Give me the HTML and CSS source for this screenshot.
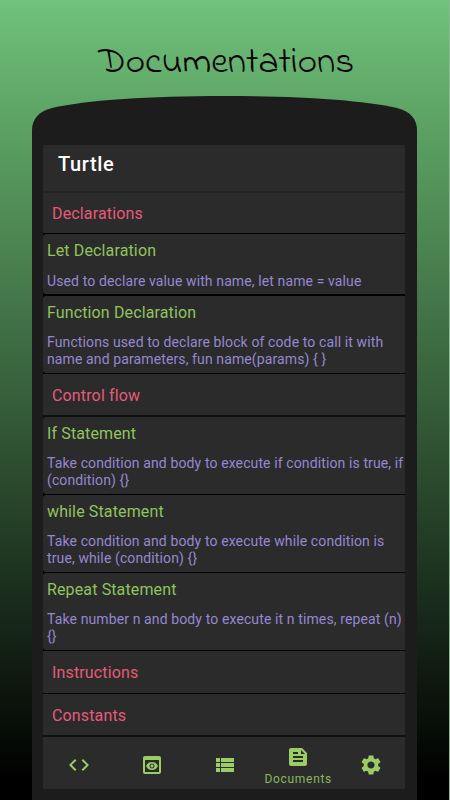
FILE: index.html
```html
<!DOCTYPE html>
<html lang="en">
<head>
  <meta charset="UTF-8">
  <meta name="viewport" content="width=device-width, initial-scale=1">
  <title>Turtle - Documentations</title>
  <link rel="stylesheet" href="styles.css">
</head>

<body>

<h1 class="headline"><svg width="449" height="60" viewBox="0 0 449 60"><text x="98.5" y="42" textLength="255.5" lengthAdjust="spacingAndGlyphs">Documentations</text></svg></h1>

<!-- Phone -->
<div class="phone">
  <svg class="phone-top" viewBox="0 0 385 49">
    <path d="M0 49V34C0 23 7 15 21 11.7C58 4 115 0 192.5 0S327 4 364 11.7C378 15 385 23 385 34V49Z"/>
  </svg>

  <div class="screen">
    <div class="topbar">Turtle</div>

    <!-- Docs list -->
    <div class="docs-list">
      <div class="group first">Declarations</div>
      <div class="doc short">
        <div class="doc-name">Let Declaration</div>
        <div class="doc-text">Used to declare value with name, let name = value</div>
      </div>
      <div class="doc">
        <div class="doc-name">Function Declaration</div>
        <div class="doc-text">Functions used to declare block of code to call it with<br>name and parameters, fun name(params) { }</div>
      </div>

      <div class="group thick">Control flow</div>
      <div class="doc">
        <div class="doc-name">If Statement</div>
        <div class="doc-text">Take condition and body to execute if condition is true, if<br>(condition) {}</div>
      </div>
      <div class="doc">
        <div class="doc-name">while Statement</div>
        <div class="doc-text">Take condition and body to execute while condition is<br>true, while (condition) {}</div>
      </div>
      <div class="doc">
        <div class="doc-name">Repeat Statement</div>
        <div class="doc-text">Take number n and body to execute it n times, repeat (n)<br>{}</div>
      </div>

      <div class="group">Instructions</div>
      <div class="group thick">Constants</div>
    </div>

    <!-- Bottom nav -->
    <div class="bottom-nav">
      <div class="nav-item">
        <svg viewBox="0 0 24 24"><path d="M9.4 16.6 4.8 12l4.6-4.6L8 6l-6 6 6 6 1.4-1.4zm5.2 0 4.6-4.6-4.6-4.6L16 6l6 6-6 6-1.4-1.4z"/></svg>
      </div>
      <div class="nav-item">
        <svg viewBox="0 0 24 24"><path d="M19 3H5c-1.11 0-2 .9-2 2v14c0 1.1.89 2 2 2h14c1.1 0 2-.9 2-2V5c0-1.1-.89-2-2-2zm0 16H5V7h14v12zm-5.500-6c0 .83-.67 1.500-1.500 1.500s-1.500-.67-1.500-1.500.67-1.500 1.500-1.500 1.500.67 1.500 1.500zM12 9c-2.730 0-5.060 1.660-6 4 .94 2.340 3.270 4 6 4s5.060-1.660 6-4c-.94-2.340-3.270-4-6-4zm0 6.500c-1.380 0-2.500-1.120-2.500-2.500s1.120-2.500 2.500-2.500 2.500 1.120 2.500 2.500-1.120 2.500-2.500 2.500z"/></svg>
      </div>
      <div class="nav-item">
        <svg viewBox="0 0 24 24"><path d="M3 14h4v-4H3v4zm0 5h4v-4H3v4zM3 9h4V5H3v4zm5 5h13v-4H8v4zm0 5h13v-4H8v4zM8 5v4h13V5H8z"/></svg>
      </div>
      <div class="nav-item active">
        <svg viewBox="0 0 24 24"><path d="M16 3H5c-1.100 0-1.990.9-1.990 2L3 19c0 1.100.89 2 1.990 2H19c1.100 0 2-.9 2-2V8l-5-5zM7 7h5v2H7V7zm10 10H7v-2h10v2zm0-4H7v-2h10v2zm-2-4V5l4 4h-4z"/></svg>
        <span>Documents</span>
      </div>
      <div class="nav-item">
        <svg viewBox="0 0 24 24"><path d="M19.140 12.940c.04-.3.06-.61.06-.94 0-.32-.02-.64-.07-.94l2.030-1.580c.18-.14.23-.41.12-.61l-1.920-3.320c-.12-.22-.37-.29-.59-.22l-2.390.96c-.5-.38-1.030-.7-1.620-.94l-.36-2.540c-.04-.24-.24-.41-.48-.41h-3.840c-.24 0-.43.17-.47.41l-.36 2.540c-.59.24-1.130.57-1.620.94l-2.390-.96c-.22-.08-.47 0-.59.22L2.740 8.870c-.12.21-.08.47.12.61l2.030 1.580c-.05.3-.09.63-.09.94s.02.64.07.94l-2.030 1.580c-.18.14-.23.41-.12.61l1.920 3.320c.12.22.37.29.59.22l2.390-.96c.5.38 1.030.7 1.620.94l.36 2.540c.05.24.24.41.48.41h3.840c.24 0 .44-.17.47-.41l.36-2.540c.59-.24 1.130-.56 1.620-.94l2.390.96c.22.08.47 0 .59-.22l1.920-3.320c.12-.22.07-.47-.12-.61l-2.010-1.580zM12 15.600c-1.980 0-3.600-1.620-3.600-3.600s1.620-3.600 3.600-3.600 3.600 1.620 3.600 3.600-1.620 3.600-3.600 3.600z"/></svg>
      </div>
    </div>
  </div>
</div>

</body>
</html>
```
FILE: styles.css
```css
html {
  background-color: #8cb893;
}
body {
  margin: 0;
  width: 449px;
  height: 800px;
  overflow: hidden;
  font-family: Roboto, sans-serif;
  background: linear-gradient(#70c27d 0, #60a867 100px, #000 780px);
}
* {
  box-sizing: border-box;
}
.headline {
  margin: 0;
  height: 96px;
  padding-top: 30px;
}
.headline svg {
  display: block;
}
.headline text {
  font-family: "Indie Flower", "Open Sans", sans-serif;
  font-size: 36px;
  font-weight: 300;
  fill: #000;
}
.phone {
  width: 385px;
  height: 704px;
  margin-left: 32px;
}
.phone-top {
  display: block;
  width: 385px;
  height: 49px;
  fill: #1c1c1c;
}
.screen {
  height: 655px;
  padding: 0 12px 0 11px;
  background-color: #1c1c1c;
}
.topbar {
  height: 48px;
  padding-left: 15px;
  line-height: 39px;
  font-size: 20px;
  font-weight: 500;
  letter-spacing: 0.65px;
  color: #fff;
  background-color: #2b2b2b;
  border-bottom: 2px solid #242424;
}
.docs-list {
  background-color: #000;
}
.group {
  height: 43px;
  padding-left: 9px;
  line-height: 43px;
  font-size: 16px;
  letter-spacing: 0.15px;
  color: #e75a7c;
  background-color: #2b2b2b;
  border-bottom: 1px solid #000;
}
.group.first {
  height: 41px;
  line-height: 41px;
}
.group.thick {
  border-bottom: 2px solid #0e0e0e;
}
.doc {
  height: 77px;
  margin-bottom: 1px;
  padding: 7px 0 0 4px;
  border-radius: 3px 0 0 3px;
  background-color: #2b2b2b;
}
.doc.short {
  height: 60px;
  margin-bottom: 2px;
}
.doc-name {
  line-height: 20px;
  font-size: 16px;
  letter-spacing: 0.13px;
  color: #8fc45f;
}
.doc-text {
  margin-top: 11px;
  line-height: 16.500px;
  font-size: 14px;
  letter-spacing: 0.115px;
  white-space: nowrap;
  color: #9687d3;
}
.doc.short .doc-text {
  margin-top: 12px;
}
.bottom-nav {
  display: flex;
  height: 52px;
  background-color: #2b2b2b;
}
.nav-item {
  flex: 0 0 73.300px;
  display: flex;
  flex-direction: column;
  align-items: center;
  padding-top: 16px;
  color: #9ccc65;
}
.nav-item:first-child {
  flex-basis: 72px;
}
.nav-item:last-child {
  flex-basis: 72px;
}
.nav-item svg {
  width: 24px;
  height: 24px;
  flex: none;
  fill: currentColor;
}
.nav-item.active {
  padding-top: 8px;
}
.nav-item span {
  line-height: 14px;
  margin-top: 3px;
  font-size: 12px;
  letter-spacing: 0.7px;
  color: #8bb55e;
}
```
